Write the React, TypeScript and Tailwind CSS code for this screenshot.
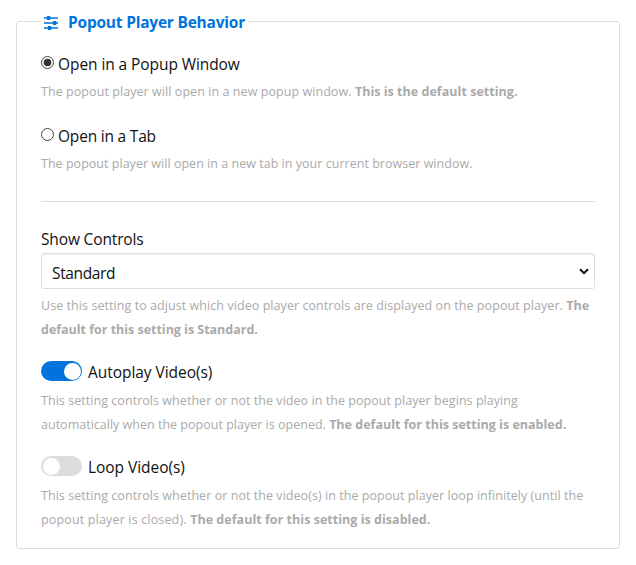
import type { ReactNode } from "react";

function Line({ children, className = "" }: { children: ReactNode; className?: string }) {
  return <span className={`block h-6 whitespace-nowrap ${className}`}>{children}</span>;
}

function Help({ children, className = "" }: { children: ReactNode; className?: string }) {
  return <p className={`text-[12.5px] leading-6 text-[#aaaaaa] ${className}`}>{children}</p>;
}

function Radio({ label, checked, className }: { label: string; checked?: boolean; className: string }) {
  return (
    <label className="flex h-6 items-start">
      <svg width="13" height="13" viewBox="0 0 13 13" className="mt-[3px] shrink-0">
        <circle cx="6.5" cy="6.5" r="6" fill="#fff" stroke="#444" />
        {checked && <circle cx="6.5" cy="6.5" r="3.8" fill="#333" />}
      </svg>
      <span className={`-mt-px ml-1 whitespace-nowrap leading-6 ${className}`}>{label}</span>
    </label>
  );
}

function Toggle({ label, on, className }: { label: string; on?: boolean; className: string }) {
  return (
    <label className="flex h-6 items-start">
      <span
        className={`mt-px flex h-5 w-[41px] shrink-0 items-center rounded-full px-[1.5px] ${
          on ? "justify-end bg-[#0073dd]" : "justify-start bg-[#dddddd]"
        }`}
      >
        <span className="h-[17px] w-[17px] rounded-full bg-white" />
      </span>
      <span className={`ml-[6px] whitespace-nowrap leading-6 ${className}`}>{label}</span>
    </label>
  );
}

export default function App() {
  return (
    <div className="h-[565px] w-[636px] bg-white px-4 pt-[10px] font-['Open_Sans','Noto_Sans',sans-serif] text-[15.5px] text-[#111111]">
      <fieldset className="h-[539px] w-[604px] rounded-[3px] border border-[#dddddd] px-6">
        <legend className="flex h-[23px] items-center pl-[3px] pr-[3px] text-[#0073dd]">
          <svg width="14" height="14" viewBox="0 0 14 14" className="mt-[2px]" fill="#0073dd">
            <path d="M0 1.3h14v1.5H0zM0 6.3h14v1.5H0zM0 11.3h14v1.5H0z" />
            <rect x="2.8" y="0" width="3.6" height="4" rx="0.8" />
            <rect x="8.8" y="5" width="3.6" height="4" rx="0.8" />
            <rect x="3.8" y="10" width="3.6" height="4" rx="0.8" />
          </svg>
          <span className="ml-[10px] mt-[2px] whitespace-nowrap font-bold tracking-[-0.22px]">Popout Player Behavior</span>
        </legend>

        <div className="pt-5">
          <Radio label="Open in a Popup Window" checked className="tracking-[-0.08px]" />
          <Help className="mt-[3px]">
            <Line className="tracking-[0.065px]">
              The popout player will open in a new popup window.{" "}
              <b className="tracking-[0.03px]">This is the default setting.</b>
            </Line>
          </Help>
        </div>
        <div className="mt-[21px]">
          <Radio label="Open in a Tab" className="tracking-[-0.2px]" />
          <Help className="mt-[3px]">
            <Line className="tracking-[0.025px]">
              The popout player will open in a new tab in your current browser window.
            </Line>
          </Help>
        </div>

        <hr className="mt-[25px] border-[#dddddd]" />

        <div className="mt-[25px]">
          <div className="h-[26px] leading-6 tracking-[-0.15px]">Show Controls</div>
          <div className="flex h-9 items-center justify-between rounded-[3px] border border-[#dddddd] pl-[10px] pr-[5px] shadow-[inset_0_1px_1px_rgba(0,0,0,0.07)]">
            <span className="mt-[6px] tracking-[-0.36px]">Standard</span>
            <svg width="10" height="7" viewBox="0 0 10 7" fill="none" stroke="#111" strokeWidth="2">
              <path d="M1 1.2l4 4 4-4" />
            </svg>
          </div>
          <Help className="mt-[5px]">
            <Line className="tracking-[0.065px]">
              Use this setting to adjust which video player controls are displayed on the popout player. <b>The</b>
            </Line>
            <Line className="tracking-[-0.02px]">
              <b>default for this setting is Standard.</b>
            </Line>
          </Help>
        </div>

        <div className="mt-[18px]">
          <Toggle label="Autoplay Video(s)" on className="tracking-[-0.05px]" />
          <Help className="mt-[5px]">
            <Line className="tracking-[0.05px]">
              This setting controls whether or not the video in the popout player begins playing
            </Line>
            <Line className="tracking-[0.01px]">
              automatically when the popout player is opened. <b>The default for this setting is enabled.</b>
            </Line>
          </Help>
        </div>
        <div className="mt-[18px]">
          <Toggle label="Loop Video(s)" className="tracking-[-0.05px]" />
          <Help className="mt-[5px]">
            <Line className="tracking-[0.05px]">
              This setting controls whether or not the video(s) in the popout player loop infinitely (until the
            </Line>
            <Line className="tracking-[0.16px]">
              popout player is closed). <b className="tracking-[0.03px]">The default for this setting is disabled.</b>
            </Line>
          </Help>
        </div>
      </fieldset>
    </div>
  );
}
